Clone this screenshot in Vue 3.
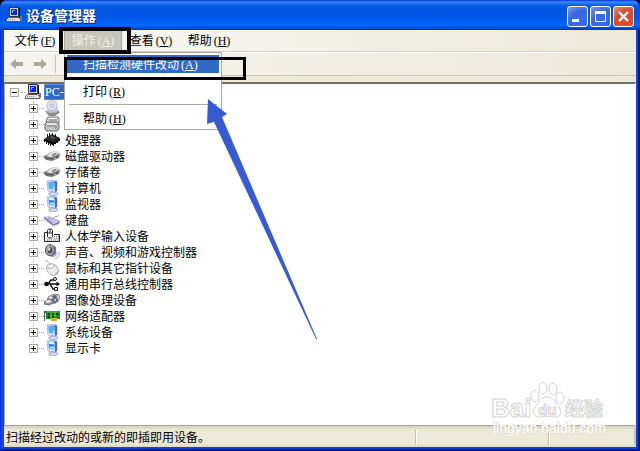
<template>
  <div class="desktop">
    <svg class="sprites" aria-hidden="true">
      <defs>
        <linearGradient id="screen" x1="0" y1="0" x2="1" y2="1">
          <stop offset="0" stop-color="#7cc4f8" />
          <stop offset="0.5" stop-color="#4aa4ee" />
          <stop offset="1" stop-color="#a8dcff" />
        </linearGradient>
        <linearGradient id="metal" x1="0" y1="0" x2="0" y2="1">
          <stop offset="0" stop-color="#f4f4f4" />
          <stop offset="1" stop-color="#8e8e8e" />
        </linearGradient>

        <symbol id="pc" viewBox="0 0 16 16">
          <path d="M3.500 .5h9v9h-9z" fill="#d6d6d6" stroke="#333" />
          <path d="M5 2h6v6H5z" fill="#0a24f0" />
          <path d="M6 3h3v1H7v2H6z" fill="#7cb0ff" />
          <path d="M13 1h1v9h-1z" fill="#111" />
          <path d="M2.500 10.500h10l2 2v2H.5v-2z" fill="#e4e4e4" stroke="#555" />
          <path d="M2 12.500h8" stroke="#888" stroke-dasharray="1 1" />
          <path d="M14 9h2v5h-2z" fill="#777" />
        </symbol>
        <symbol id="cd" viewBox="0 0 16 16">
          <path d="M1 11l5-3h7l3 4-5 4H5z" fill="#c5c5c5" />
          <path d="M1 11l5 2 10-1-5 4H5z" fill="#8a8a8a" />
          <ellipse cx="8" cy="5.500" rx="5" ry="5.500" fill="#dfe0f4" stroke="#a9a9c6" stroke-width="0.8" />
          <path d="M8 5.500L4 2.500l3-2z" fill="#f6ddb5" />
          <path d="M8 5.500l4 3-2 2z" fill="#c9d2fa" />
          <circle cx="8" cy="5.500" r="1.500" fill="#fff" stroke="#8d8db0" stroke-width="0.7" />
          <path d="M13 12h2" stroke="#3f9a3f" />
        </symbol>
        <symbol id="floppy" viewBox="0 0 16 16">
          <path d="M3 2l2-1h9l1 2v4l-2 1H4L2 6z" fill="#d6d6d6" stroke="#666" stroke-width="0.9" />
          <path d="M1 8l2-2h10l2 2v5l-2 2H3l-2-2z" fill="#c6c6c6" stroke="#555" stroke-width="0.9" />
          <path d="M3 10h10M5 4h8" stroke="#777" />
          <path d="M3 8h9M5 2.500h7" stroke="#fff" />
          <path d="M11 12h2" stroke="#2d9b31" />
        </symbol>
        <symbol id="chip" viewBox="0 0 16 16">
          <path d="M0 7l8-5 8 4-7 6z" fill="#2c2c2c" />
          <path d="M1 8l8 4 7-5" fill="none" stroke="#000" stroke-width="2" />
          <path d="M.5 7v3M2.500 9v3M4.500 10v3M6.500 11v3M9.500 11v3M11.500 9v3M13.500 8v3M15.500 6v3M3.500 2v3M5.500 1v3M8.500 1v3M11.500 2v3" stroke="#111" />
          <path d="M6 5l2-1 3 2-2 1z" fill="#606060" />
        </symbol>
        <symbol id="disk" viewBox="0 0 16 16">
          <path d="M0 8l7-4 6-1 3 3-1 4-7 3-6-1-2-2z" fill="#777" />
          <path d="M0 8l7-4 6-1 3 3-8 4z" fill="url(#metal)" />
          <path d="M3 8l5-3 3 1-4 3z" fill="#e9e9e9" />
          <path d="M7 7l4-2 2 1-4 2z" fill="#8d8d8d" />
          <path d="M1 9l7 2 7-4" stroke="#555" fill="none" />
          <path d="M10 11l2-1" stroke="#d9d9d9" />
        </symbol>
        <symbol id="monitor" viewBox="0 0 16 16">
          <path d="M3 1l8-1 2 1v10l-3 2-6-2z" fill="#d7e2ff" stroke="#95a6d4" stroke-width="0.7" />
          <path d="M4 2l7-1v9L5 9z" fill="url(#screen)" />
          <path d="M11 1l2 1v9l-2 1z" fill="#5867b7" />
          <path d="M7 11l4 1v2l-3-1z" fill="#8895bd" />
          <path d="M5 13l4-1 5 1-1 2-5 1-3-1z" fill="#d6daea" stroke="#9199b4" stroke-width="0.7" />
        </symbol>
        <symbol id="display" viewBox="0 0 16 16">
          <use href="#monitor" />
          <path d="M5 2h5v2H5z" fill="#dff8fa" />
          <path d="M5 5h2l1 1h2" stroke="#326792" fill="none" />
          <path d="M6 8l2-1 2 1" stroke="#dff8fa" fill="none" />
        </symbol>
        <symbol id="keyboard" viewBox="0 0 16 16">
          <path d="M0 5l4-1 12 5-1 3-6 2L0 7z" fill="#8585c5" />
          <path d="M1 5l3-1 11 5-5 3z" fill="#e5e5fb" />
          <path d="M2 6l10 5M4 5l10 4M6 8l4-2M9 10l4-2M4 7l3-2" stroke="#9b9bcb" stroke-width="0.8" />
          <path d="M10 6c1-3 3 0 5-3" stroke="#8d8dbb" fill="none" />
        </symbol>
        <symbol id="hid" viewBox="0 0 16 16">
          <path d="M.5 10V4.500H3M10 6.500h5.500v7H.5V10" fill="#eee" stroke="#222" />
          <path d="M3.500 2.500c0-2 5-2 5 0v6c0 2-5 2-5 0z" fill="#fff" stroke="#222" />
          <path d="M6 1v4M3.500 5h5" stroke="#333" />
          <path d="M10 8.500h5M10 10.500h5M3 12h11" stroke="#777" stroke-dasharray="1 1" />
        </symbol>
        <symbol id="sound" viewBox="0 0 16 16">
          <path d="M3 3l5-2 4 2v7l-4 3-5-2-2-3z" fill="#777986" />
          <ellipse cx="6" cy="6" rx="4.500" ry="5.500" fill="#aeb0ba" stroke="#555763" />
          <ellipse cx="6" cy="6" rx="2.500" ry="3.500" fill="#4b4d58" />
          <ellipse cx="5" cy="5" rx="1.500" ry="2" fill="#c4c5d0" />
          <path d="M9 13c3-1 4-3 4-5M11 15c3-1 5-4 4-7" stroke="#9ba7ed" fill="none" />
        </symbol>
        <symbol id="mouse" viewBox="0 0 16 16">
          <path d="M1 1c2-1 3 1 5 3" stroke="#aaa" fill="none" />
          <path d="M3 6c1-3 7-3 9 0 2 2 3 5 2 7-2 3-6 3-8 1-3-2-4-5-3-8z" fill="#ececec" stroke="#aaa" />
          <path d="M4 8c3 1 5 0 7-3M6 4l2 4" stroke="#aaa" fill="none" />
          <path d="M5 7c1-2 2-2 3-2l1 2-3 1z" fill="#fff" />
          <path d="M11 14l3-3v2l-2 2z" fill="#ababab" />
        </symbol>
        <symbol id="usb" viewBox="0 0 16 16">
          <path d="M3 8h12M4 8l3-4h4M6 8l3 5h2" stroke="#111" stroke-width="1.400" fill="none" />
          <circle cx="2.500" cy="8" r="2.300" fill="#111" />
          <path d="M12.500 5.500L16 8l-3.500 2.500z" fill="#111" />
          <circle cx="11" cy="3" r="1.500" fill="#fff" stroke="#111" />
          <path d="M10.500 11.500h3v3h-3z" fill="#fff" stroke="#111" />
        </symbol>
        <symbol id="imaging" viewBox="0 0 16 16">
          <path d="M4 5l6-3 5 1 1 4-5 4-7-1z" fill="#d9dae0" stroke="#777" stroke-width="0.8" />
          <path d="M0 10l4-3 6 1v3l-5 2-5-1z" fill="#9699a5" stroke="#555" stroke-width="0.7" />
          <path d="M1 9l4-1 3 1-4 2z" fill="#eee" />
          <path d="M7 4l4-1 3 1-4 2z" fill="#5d6272" />
          <circle cx="11" cy="8" r="2.500" fill="#777b89" stroke="#444" stroke-width="0.8" />
          <circle cx="11" cy="8" r="1" fill="#c9d6f5" />
          <path d="M10 12l5-3" stroke="#83a5ef" />
        </symbol>
        <symbol id="network" viewBox="0 0 16 16">
          <path d="M1 3h15v8H2V5H1z" fill="#168b23" />
          <path d="M.5 3v10" stroke="#555" />
          <path d="M4 5h2v2H4zM8 5h2v2H8zM12 5h2v2h-2zM4 8h2v2H4zM8 8h2v2H8z" fill="#07480f" />
          <path d="M3 4h11M7 5v5M11 5v4" stroke="#78dc5e" stroke-width="0.8" />
          <path d="M7 10h6v3H7z" fill="#dccb32" />
          <path d="M8 11v2M10 11v2M12 11v2" stroke="#806910" stroke-width="0.6" />
        </symbol>
      </defs>
    </svg>

    <div class="window">
      <header class="titlebar">
        <svg class="icon" aria-hidden="true"><use href="#pc" /></svg>
        <h1>设备管理器</h1>
        <div class="controls">
          <button type="button" aria-label="最小化">
            <svg viewBox="0 0 19 19"><path d="M4 13.500h7" stroke="#fff" stroke-width="3" /></svg>
          </button>
          <button type="button" aria-label="最大化">
            <svg viewBox="0 0 19 19"><path d="M4.500 5v9.500h10V5" fill="none" stroke="#fff" /><path d="M4 5.500h11" stroke="#fff" stroke-width="3" /></svg>
          </button>
          <button type="button" class="close" aria-label="关闭">
            <svg viewBox="0 0 19 19"><path d="M5 5l9 9M14 5l-9 9" stroke="#fff" stroke-width="2.400" /></svg>
          </button>
        </div>
      </header>

      <div class="client">
        <nav class="menubar">
          <div v-for="menu in menus" :key="menu.key" class="menu">
            <button
              type="button"
              class="menu-button"
              :class="{ active: openMenu === menu.key }"
              @click="toggleMenu(menu.key)"
            >{{ menu.label }}<span class="key">(<u>{{ menu.key }}</u>)</span></button>
            <div v-if="menu.items && openMenu === menu.key" class="popup">
              <template v-for="(item, i) in menu.items" :key="item.key">
                <hr v-if="i > 0">
                <button type="button" class="popup-item" :class="{ hover: i === 0 }">
                  {{ item.label }}<span class="key">(<u>{{ item.key }}</u>)</span>
                </button>
              </template>
            </div>
            <span v-if="menu.items" class="mark mark-menu"></span>
            <span v-if="menu.items" class="mark mark-item"></span>
            <svg v-if="menu.items" class="arrow" viewBox="0 0 110 241" aria-hidden="true">
              <path d="M1 0L20 15l-5 3 95 222h-1L7 23l-7 2z" fill="#375bd2" />
            </svg>
          </div>
        </nav>

        <div class="toolbar">
          <button type="button" disabled aria-label="后退">
            <svg viewBox="0 0 14 12"><path d="M0 6l6-5v3h7v4H6v3z" /></svg>
          </button>
          <button type="button" disabled aria-label="前进">
            <svg viewBox="0 0 14 12"><path d="M13 6L7 1v3H0v4h7v3z" /></svg>
          </button>
          <span class="divider"></span>
        </div>

        <main class="tree">
          <div class="root">
            <button type="button" class="expander open" aria-label="折叠" @click="expanded = !expanded"></button>
            <span class="stub"></span>
            <svg class="icon" aria-hidden="true"><use href="#pc" /></svg>
            <span class="label selected">PC-</span>
          </div>
          <ul v-if="expanded">
            <li v-for="device in devices" :key="device.icon + device.name">
              <button type="button" class="expander" aria-label="展开"></button>
              <span class="stub"></span>
              <svg class="icon" aria-hidden="true"><use :href="'#' + device.icon" /></svg>
              <span class="label">{{ device.name }}</span>
            </li>
          </ul>
        </main>

        <footer class="statusbar">
          <span class="message">扫描经过改动的或新的即插即用设备。</span>
          <span class="pane"></span>
          <span class="pane small"></span>
        </footer>
      </div>

      <svg class="watermark" viewBox="0 0 118 60">
        <g class="brand">
          <text x="0" y="38" font-size="26">Bai</text>
          <ellipse cx="44" cy="17" rx="4" ry="6" />
          <ellipse cx="52" cy="9" rx="4" ry="6" />
          <ellipse cx="62" cy="10" rx="4" ry="6" />
          <ellipse cx="69" cy="19" rx="4" ry="6" />
          <path d="M56 18c7 0 8 6 12 10 4 6 0 11-6 10-4-1-8-1-12 0-7 1-10-5-6-10 4-4 5-10 12-10z" />
          <text x="47" y="36" font-size="15">du</text>
          <text x="74" y="37" font-size="19">经验</text>
        </g>
        <text class="url" x="2" y="54" font-size="14">jingyan.baidu.com</text>
      </svg>
    </div>
  </div>
</template>

<script setup>
import { ref } from 'vue'

const openMenu = ref('A')
const expanded = ref(true)

const menus = [
  { label: '文件', key: 'F' },
  {
    label: '操作',
    key: 'A',
    items: [
      { label: '扫描检测硬件改动', key: 'A' },
      { label: '打印', key: 'R' },
      { label: '帮助', key: 'H' },
    ],
  },
  { label: '查看', key: 'V' },
  { label: '帮助', key: 'H' },
]

// the first two names stay behind the open menu
const devices = [
  { name: '', icon: 'cd' },
  { name: '', icon: 'floppy' },
  { name: '处理器', icon: 'chip' },
  { name: '磁盘驱动器', icon: 'disk' },
  { name: '存储卷', icon: 'disk' },
  { name: '计算机', icon: 'monitor' },
  { name: '监视器', icon: 'display' },
  { name: '键盘', icon: 'keyboard' },
  { name: '人体学输入设备', icon: 'hid' },
  { name: '声音、视频和游戏控制器', icon: 'sound' },
  { name: '鼠标和其它指针设备', icon: 'mouse' },
  { name: '通用串行总线控制器', icon: 'usb' },
  { name: '图像处理设备', icon: 'imaging' },
  { name: '网络适配器', icon: 'network' },
  { name: '系统设备', icon: 'monitor' },
  { name: '显示卡', icon: 'display' },
]

const toggleMenu = (key) => {
  openMenu.value = openMenu.value === key ? '' : key
}
</script>

<style>
body {
  margin: 0;
  background: #000;
}
</style>

<style scoped>
.desktop {
  font: 12px/16px "Noto Sans CJK SC", sans-serif;
  color: #000;
}
.sprites {
  position: absolute;
  width: 0;
  height: 0;
}
button {
  font: inherit;
  color: inherit;
  padding: 0;
  margin: 0;
  border: 0;
  background: none;
}
.window {
  position: relative;
  display: flex;
  flex-direction: column;
  box-sizing: border-box;
  min-height: 100vh;
  padding: 0 4px 4px;
  border-radius: 8px 8px 0 0;
  background: #0a48dc;
  box-shadow: inset 1px 0 #0831d9, inset -2px -2px #00138c;
}

/* title bar */
.titlebar {
  display: flex;
  align-items: center;
  height: 30px;
  margin: 0 -4px;
  padding: 0 6px;
  border-radius: 8px 8px 0 0;
  background: linear-gradient(#0831d9 0, #3c8cf5 2px, #0a62ec 5px, #0054e0 9px, #0058ea 18px, #0068fc 25px, #0050dc 28px, #0038b8 30px);
}
.icon {
  flex: none;
  width: 16px;
  height: 16px;
}
h1 {
  flex: 1;
  margin: 0 4px;
  font-size: 14px;
  line-height: 20px;
  font-weight: bold;
  color: #fff;
  text-shadow: 1px 1px #0a1f80;
}
.controls {
  display: flex;
  gap: 2px;
  padding-top: 3px;
}
.controls button {
  width: 21px;
  height: 21px;
  border: 1px solid #fff;
  border-radius: 3px;
  background: radial-gradient(circle at 80% 90%, #2f6cf8, #3d66dc 60%, #7c9cf0);
}
.controls svg {
  display: block;
  width: 19px;
  height: 19px;
}
.controls .close {
  background: radial-gradient(circle at 80% 90%, #e05020, #d84a2c 60%, #f09a80);
}

/* menus */
.client {
  flex: 1;
  display: flex;
  flex-direction: column;
  background: #ece9d8;
}
.menubar {
  display: flex;
  height: 21px;
  padding: 0 2px 1px;
  border-bottom: 1px solid #fff;
  background: linear-gradient(90deg, #f8f8f6, #ece9d8);
  box-shadow: inset 0 -1px #d8d2bd;
}
.menu {
  position: relative;
}
.menu-button {
  width: 58px;
  height: 21px;
  white-space: nowrap;
}
.menu-button.active {
  border: 1px solid #aca899;
  background: #c8c5ba;
  color: #f0efea;
}
.key {
  margin-left: 2px;
  font-family: "Liberation Serif", serif;
}
u {
  text-underline-offset: 1px;
}
.popup {
  position: absolute;
  z-index: 2;
  top: 22px;
  left: 0;
  display: flex;
  flex-direction: column;
  box-sizing: border-box;
  width: 158px;
  padding: 2px;
  border: 1px solid #aca899;
  background: #fff;
}
.popup-item {
  height: 18px;
  padding-left: 16px;
  text-align: left;
  white-space: nowrap;
}
.popup-item.hover {
  background: #316ac5;
  color: #fff;
}
hr {
  width: 148px;
  height: 1px;
  margin: 4px auto;
  border: 0;
  background: #aca899;
}
.mark {
  position: absolute;
  z-index: 3;
  box-sizing: border-box;
  border: 3px solid #000;
  pointer-events: none;
}
.mark-menu {
  top: -3px;
  left: -5px;
  width: 72px;
  height: 27px;
  border-width: 4px;
}
.mark-item {
  top: 27px;
  left: 0;
  width: 182px;
  height: 23px;
}
.arrow {
  position: absolute;
  z-index: 4;
  top: 69px;
  left: 143px;
  width: 110px;
  height: 241px;
  pointer-events: none;
}

/* toolbar */
.toolbar {
  display: flex;
  align-items: center;
  gap: 10px;
  height: 22px;
  padding-left: 6px;
  border-bottom: 1px solid #cbc7b8;
  background: linear-gradient(90deg, #f5f4f0, #ece9d8);
}
.toolbar button,
.toolbar svg {
  display: block;
  width: 14px;
  height: 12px;
}
.toolbar path {
  fill: #aca899;
}
.divider {
  width: 1px;
  height: 18px;
  margin-left: -3px;
  background: #c5c2b4;
}

/* device tree */
.tree {
  flex: 1;
  margin-top: 6px;
  border: 1px solid #aca899;
  border-top: 2px solid #716f64;
  border-right-color: #fff;
  background: #fff;
}
.root,
li {
  display: flex;
  align-items: center;
  height: 16px;
}
.root {
  padding-left: 5px;
}
ul {
  margin: 0;
  padding: 0;
  list-style: none;
}
li {
  margin-left: 24px;
  background: repeating-linear-gradient(#aca899 0 1px, transparent 1px 2px) 4px 0 / 1px 16px no-repeat;
}
li:last-child {
  background-size: 1px 8px;
}
.expander {
  flex: none;
  width: 9px;
  height: 9px;
  border: 1px solid #aca899;
  background:
    linear-gradient(#000, #000) center / 5px 1px no-repeat,
    linear-gradient(#000, #000) center / 1px 5px no-repeat,
    #fff;
}
.expander.open {
  background: linear-gradient(#000, #000) center / 5px 1px no-repeat, #fff;
}
.stub {
  width: 6px;
  height: 1px;
  background: repeating-linear-gradient(90deg, transparent 0 1px, #aca899 1px 2px);
}
.label {
  margin-left: 5px;
  white-space: nowrap;
}
.selected {
  box-sizing: border-box;
  width: 90px;
  height: 16px;
  margin-left: 3px;
  padding-left: 1px;
  outline: 1px dotted #ce953a;
  outline-offset: -1px;
  background: #316ac5;
  color: #fff;
  font-family: "Liberation Serif", serif;
}

/* status bar */
.statusbar {
  display: flex;
  align-items: center;
  height: 21px;
  background: linear-gradient(#d2cfbf, #ece9d8 4px, #ece9d8 17px, #dedac8);
}
.message {
  flex: 1;
  padding-left: 2px;
}
.pane {
  width: 132px;
  height: 16px;
  border-left: 1px solid #c5c2b4;
  box-shadow: inset 1px 0 #fff;
}
.pane.small {
  width: 85px;
  border-right: 2px solid #c5c2b4;
}

.watermark {
  position: absolute;
  right: 31px;
  bottom: 12px;
  width: 118px;
  height: 60px;
  overflow: visible;
  fill: #fff;
  font-family: "Liberation Sans", "Noto Sans CJK SC", sans-serif;
  pointer-events: none;
}
.brand {
  font-weight: bold;
  stroke: #d4d4d4;
  stroke-width: 1px;
}
.url {
  stroke: #dddbd3;
  stroke-width: 1px;
  paint-order: stroke;
}
</style>
